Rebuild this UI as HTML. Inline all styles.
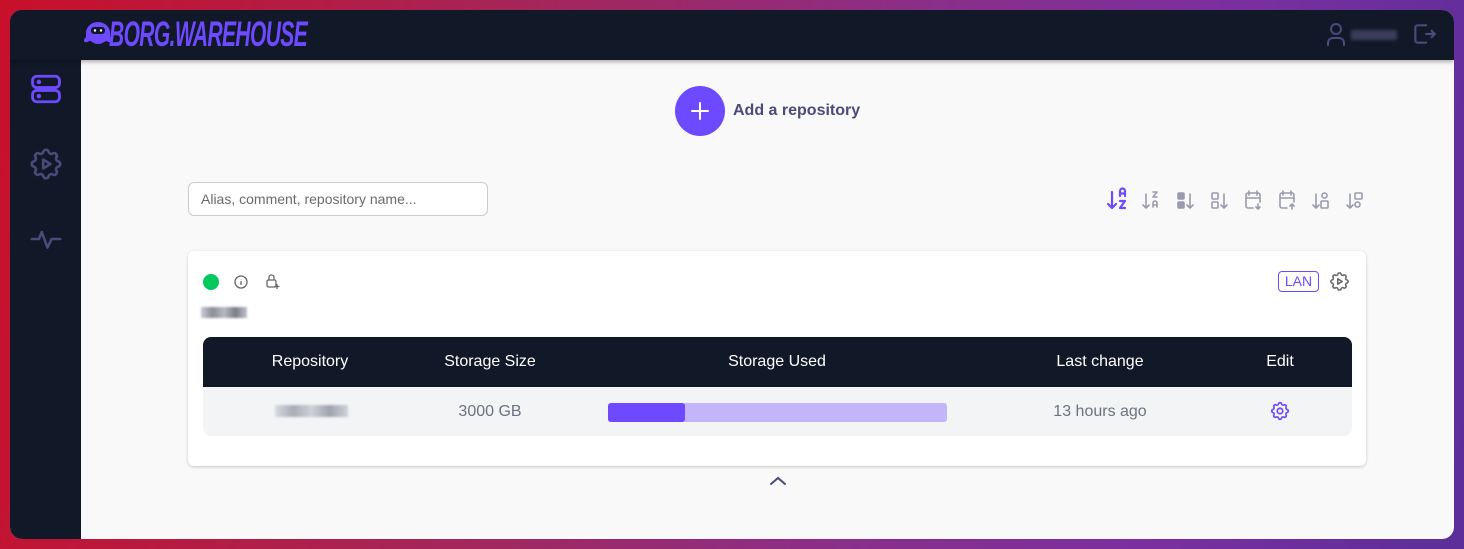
<!DOCTYPE html>
<html><head><meta charset="utf-8"><style>
*{margin:0;padding:0;box-sizing:border-box}
body{width:1464px;height:549px;overflow:hidden;font-family:"Liberation Sans",sans-serif;background:linear-gradient(100deg,#c8102a 0%,#a4265a 35%,#8a2f8a 60%,#7a2fa0 80%,#5b2e9a 100%);position:relative}
.win{position:absolute;left:10px;top:10px;width:1444px;height:529px;border-radius:12px;overflow:hidden;background:#f9f9f9}
.hdr{position:absolute;left:0;top:0;width:1444px;height:50px;background:#111827;box-shadow:0 2px 4px rgba(0,0,0,.3);z-index:2}
.side{position:absolute;left:0;top:0;width:71px;height:529px;background:#111827}
.a{position:absolute}
.logo{left:99px;top:5px;font-weight:bold;font-style:italic;font-size:35px;color:#6d4aff;letter-spacing:-1px;transform:scaleX(.6);transform-origin:left;white-space:nowrap}
.th{position:absolute;top:0;height:50px;line-height:50px;color:#fff;font-size:16px;transform:translateX(-50%)}
.td{position:absolute;top:50px;height:49px;line-height:49px;color:#6b7280;font-size:16px;transform:translateX(-50%)}
.blur{background:linear-gradient(90deg,#c9ccd4,#8a8d99,#b8bac2,#7a7d88,#c0c2ca);filter:blur(1px)}
</style></head><body>
<svg width="0" height="0" style="position:absolute"><defs><path id="g" d="M10.325 4.317c.426-1.756 2.924-1.756 3.35 0a1.724 1.724 0 002.573 1.066c1.543-.94 3.31.826 2.37 2.37a1.724 1.724 0 001.065 2.572c1.756.426 1.756 2.924 0 3.35a1.724 1.724 0 00-1.066 2.573c.94 1.543-.826 3.31-2.37 2.37a1.724 1.724 0 00-2.572 1.065c-.426 1.756-2.924 1.756-3.35 0a1.724 1.724 0 00-2.573-1.066c-1.543.94-3.31-.826-2.37-2.37a1.724 1.724 0 00-1.065-2.572c-1.756-.426-1.756-2.924 0-3.35a1.724 1.724 0 001.066-2.573c-.94-1.543.826-3.31 2.37-2.37.996.608 2.296.07 2.572-1.065z"/></defs></svg>
<div class="win">
<div class="side">
<svg class="a" style="left:19px;top:62px" width="34" height="34" viewBox="0 0 24 24" fill="none" stroke="#6d4aff" stroke-width="2" stroke-linecap="round"><rect x="2.5" y="3" width="19" height="8" rx="3"/><rect x="2.5" y="13" width="19" height="8" rx="3"/><circle cx="7" cy="7" r=".6" fill="#6d4aff"/><circle cx="7" cy="17" r=".6" fill="#6d4aff"/></svg>
<svg class="a" style="left:17px;top:135px" width="38" height="38" viewBox="0 0 24 24" fill="none" stroke="#494b7a" stroke-width="1.6" stroke-linejoin="round"><use href="#g"/><path d="M10.2 9.2v5.6l4.6-2.8z"/></svg>
<svg class="a" style="left:19px;top:212px" width="34" height="34" viewBox="0 0 24 24" fill="none" stroke="#494b7a" stroke-width="1.8" stroke-linecap="round" stroke-linejoin="round"><path d="M2 12h5l2-5 4 11 3-6h6"/></svg>
</div>
<div class="hdr">
<svg class="a" style="left:72px;top:9px" width="32" height="28" viewBox="0 0 32 28"><path d="M4 14a12 11 0 0124 0v4c2 2 3 4 1 5-2 1-4-1-5-1s-3 3-8 3-6-3-8-3-3 2-5 1c-2-1-1-3 1-5z" fill="#6d4aff"/><rect x="9" y="8" width="14" height="7" rx="3" fill="#111827"/><circle cx="13" cy="11.5" r="1.2" fill="#fff"/><circle cx="19" cy="11.5" r="1.2" fill="#fff"/></svg>
<div class="a logo">BORG.WAREHOUSE</div>
<svg class="a" style="left:1314px;top:11px" width="24" height="26" viewBox="0 0 24 26" fill="none" stroke="#494b7a" stroke-width="2"><circle cx="12" cy="8" r="5"/><path d="M4 25v-3a5 5 0 015-5h6a5 5 0 015 5v3"/></svg>
<div class="a blur" style="left:1341px;top:20px;width:46px;height:10px;background:#3a3d5a;filter:blur(1.5px)"></div>
<svg class="a" style="left:1401px;top:11px" width="26" height="26" viewBox="0 0 24 24" fill="none" stroke="#494b7a" stroke-width="2" stroke-linecap="round" stroke-linejoin="round"><path d="M14 4H6a2 2 0 00-2 2v12a2 2 0 002 2h8M14 12h8M19 9l3 3-3 3"/></svg>
</div>
<div class="a" style="left:665px;top:76px;width:50px;height:50px;border-radius:50%;background:#6d4aff"></div>
<svg class="a" style="left:680px;top:91px" width="20" height="20" viewBox="0 0 20 20" stroke="#fff" stroke-width="2" stroke-linecap="round"><path d="M10 2v16M2 10h16"/></svg>
<div class="a" style="left:723px;top:92px;font-size:16px;font-weight:bold;color:#494b7a">Add a repository</div>
<div class="a" style="left:178px;top:172px;width:300px;height:34px;border:1px solid #ccc;border-radius:6px;background:#fff;font-size:14px;color:#6b6b6b;padding:8px 12px">Alias, comment, repository name...</div>
<svg class="a" style="left:1096px;top:176px" width="270" height="26" viewBox="0 0 270 26" fill="none" stroke-linecap="round" stroke-linejoin="round">
<g stroke="#6d4aff" stroke-width="2.2"><path d="M6 6v16M2 18l4 4 4-4"/><path d="M14 10V5a2.5 2.5 0 015 0v5M14 7.5h5M14 15h5l-5 7h5"/></g>
<g stroke="#9a9aae" stroke-width="1.6"><path d="M40 8v14M37 19l3 3 3-3"/><path d="M47 6h4l-4 5h4M47 21v-4a2 2 0 014 0v4M47 19h4"/>
<rect x="72" y="7" width="6" height="6" rx="1" fill="#9a9aae"/><rect x="72" y="16" width="6" height="6" rx="1" fill="#9a9aae"/><path d="M84 8v14M81 19l3 3 3-3"/>
<rect x="106" y="7" width="6" height="6" rx="1"/><rect x="106" y="16" width="6" height="6" rx="1"/><path d="M118 8v14M115 19l3 3 3-3"/>
<path d="M147 22h-5a2 2 0 01-2-2V9a2 2 0 012-2h10a2 2 0 012 2v7M140 12h14M143 5v4M151 5v4M152 18v5M150 21l2 2 2-2"/>
<path d="M181 22h-5a2 2 0 01-2-2V9a2 2 0 012-2h10a2 2 0 012 2v7M174 12h14M177 5v4M185 5v4M186 23v-5M184 20l2-2 2 2"/>
<path d="M210 8v14M207 19l3 3 3-3"/><rect x="216" y="7" width="5" height="5" rx="2.5"/><rect x="215" y="15" width="7" height="7" rx="1"/>
<path d="M244 8v14M241 19l3 3 3-3"/><rect x="249" y="7" width="7" height="6" rx="1"/><rect x="249" y="16" width="5" height="5" rx="2.5"/></g>
</svg>
<div class="a" style="left:178px;top:241px;width:1178px;height:215px;background:#fff;border-radius:6px;box-shadow:0 1px 3px rgba(0,0,0,.2)">
<div class="a" style="left:15px;top:23px;width:16px;height:16px;border-radius:50%;background:#00c95d"></div>
<svg class="a" style="left:46px;top:24px" width="14" height="14" viewBox="0 0 14 14" fill="none" stroke="#666" stroke-width="1.3"><circle cx="7" cy="7" r="6"/><path d="M7 6v4M7 4v.3"/></svg>
<svg class="a" style="left:77px;top:22px" width="16" height="17" viewBox="0 0 16 17" fill="none" stroke="#666" stroke-width="1.3"><rect x="2" y="7" width="9" height="7" rx="1.5"/><path d="M4 7V4.5a2.5 2.5 0 015 0V7M12 11v5M9.5 13.5h5"/></svg>
<div class="a blur" style="left:13px;top:56px;width:46px;height:11px"></div>
<div class="a" style="left:1090px;top:20px;width:41px;height:21px;border:1.5px solid #6d4aff;border-radius:4px;color:#6d4aff;font-size:14px;text-align:center;line-height:18px">LAN</div>
<svg class="a" style="left:1140px;top:19px" width="23" height="23" viewBox="0 0 24 24" fill="none" stroke="#666" stroke-width="1.6" stroke-linejoin="round"><use href="#g"/><path d="M10.2 9.2v5.6l4.6-2.8z"/></svg>
<div class="a" style="left:15px;top:86px;width:1149px;height:99px;border-radius:8px;overflow:hidden;background:#f3f4f6">
<div class="a" style="left:0;top:0;width:100%;height:50px;background:#111827"></div>
<div class="th" style="left:107px">Repository</div>
<div class="th" style="left:287px">Storage Size</div>
<div class="th" style="left:574px">Storage Used</div>
<div class="th" style="left:897px">Last change</div>
<div class="th" style="left:1077px">Edit</div>
<div class="a blur" style="left:72px;top:68px;width:73px;height:12px;background:linear-gradient(90deg,#d8dae0,#a9acb6,#cfd1d7,#9fa2ad,#d0d2d8)"></div>
<div class="td" style="left:287px">3000 GB</div>
<div class="a" style="left:405px;top:66px;width:339px;height:19px;border-radius:3px;background:#c3b5fa"><div style="width:77px;height:19px;border-radius:3px;background:#6d4aff"></div></div>
<div class="td" style="left:897px">13 hours ago</div>
<svg class="a" style="left:1066px;top:63px" width="22" height="22" viewBox="0 0 24 24" fill="none" stroke="#6d4aff" stroke-width="1.8"><use href="#g"/><circle cx="12" cy="12" r="3"/></svg>
</div>
</div>
<svg class="a" style="left:759px;top:465px" width="18" height="12" viewBox="0 0 18 12" fill="none" stroke="#494b7a" stroke-width="2" stroke-linecap="round"><path d="M2 9l7-6 7 6"/></svg>
</div>
</body></html>
